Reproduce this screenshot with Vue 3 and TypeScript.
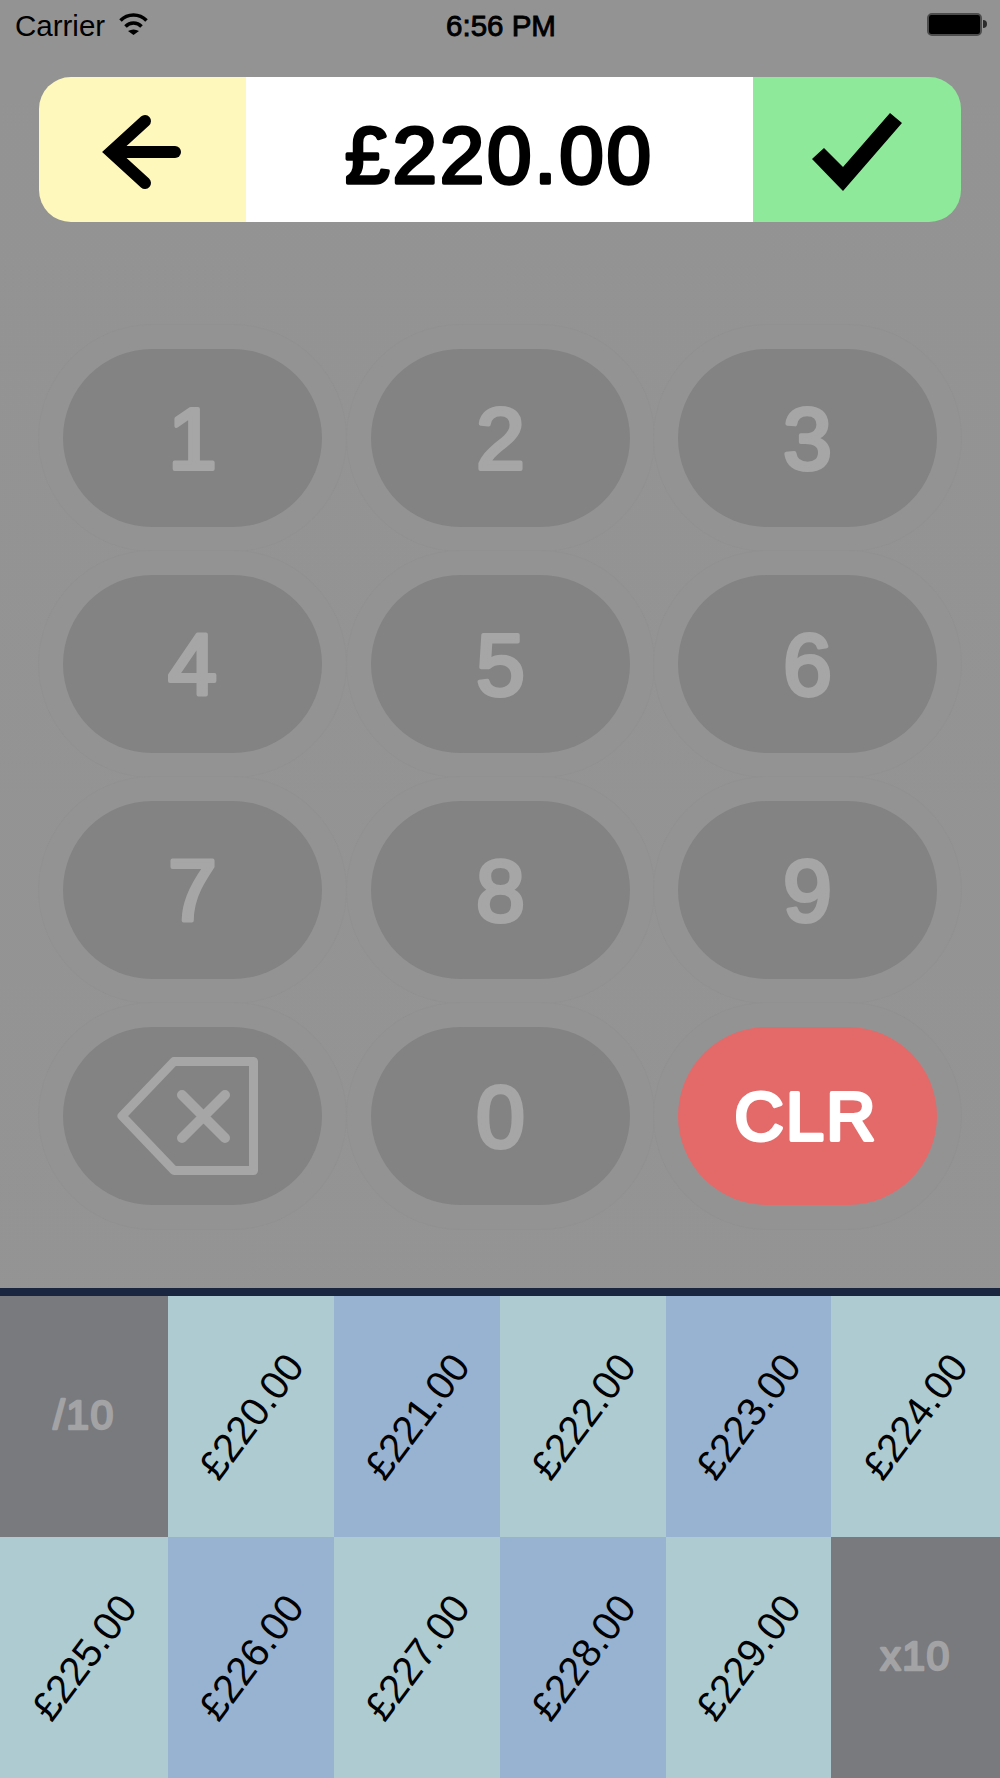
<template>
  <div class="screen">
    <div class="status">
      <div class="status__left">
        <span>Carrier</span>
        <svg class="wifi" width="29" height="22" viewBox="0 0 29 22">
          <path d="M1.500 7.500a18 18 0 0 1 26 0" />
          <path d="M6.500 13.500a11 11 0 0 1 16 0" />
          <path d="M9 18q5.500-3 11 0l-5.500 4z" class="wifi__dot" />
        </svg>
      </div>
      <span class="status__time">6:56 PM</span>
      <div class="status__right">
        <span class="battery"><i></i></span>
        <span class="battery__nub"></span>
      </div>
    </div>

    <div class="amount-bar">
      <button type="button" class="amount-bar__back">
        <svg width="80" height="76" viewBox="0 0 80 76">
          <path d="M44 7L10 38l34 31" fill="none" stroke="#000" stroke-width="12" stroke-linecap="round" stroke-miterlimit="4" />
          <path d="M12 38h62" fill="none" stroke="#000" stroke-width="12" stroke-linecap="round" />
        </svg>
      </button>
      <div class="amount-bar__value">
        <svg width="100%" height="100%">
          <text class="rounded" x="50%" y="50%" dy="31">£220.00</text>
        </svg>
      </div>
      <button type="button" class="amount-bar__ok">
        <svg width="92" height="80" viewBox="0 0 92 80">
          <path d="M91 11L79 1 32 55 13 36 1 47l31 32z" fill="#000" />
        </svg>
      </button>
    </div>

    <div class="keypad">
      <button v-for="key in keys" :key="key" type="button" class="key">
        <svg v-if="key === 'del'" class="key__del" width="141" height="118" viewBox="0 0 141 118">
          <path d="M136.500 4.500H57L5 59l52 54.500h79.500z" fill="none" stroke="#a6a6a6" stroke-width="9" stroke-linejoin="round" />
          <path d="M65 38l43 43M108 38L65 81" fill="none" stroke="#a6a6a6" stroke-width="10" stroke-linecap="round" />
        </svg>
        <svg v-else width="100%" height="100%">
          <text class="rounded" x="50%" y="50%" dy="31">{{ key }}</text>
        </svg>
      </button>
      <button type="button" class="key key--clear">
        <svg width="100%" height="100%">
          <text class="rounded" x="49.500%" y="50%" dy="24">CLR</text>
        </svg>
      </button>
    </div>

    <div class="amounts">
      <button
        v-for="cell in cells"
        :key="cell.label"
        type="button"
        class="cell"
        :class="`cell--${cell.kind}`"
      >
        <svg v-if="cell.kind === 'step'" width="100%" height="100%">
          <text class="rounded" x="50%" y="50%" dy="12">{{ cell.label }}</text>
        </svg>
        <span v-else>{{ cell.label }}</span>
      </button>
    </div>
  </div>
</template>

<script setup lang="ts">
interface Cell {
  label: string
  kind: 'step' | 'teal' | 'blue'
}

const keys = ['1', '2', '3', '4', '5', '6', '7', '8', '9', 'del', '0']

const cells: Cell[] = [
  { label: '/10', kind: 'step' },
  { label: '£220.00', kind: 'teal' },
  { label: '£221.00', kind: 'blue' },
  { label: '£222.00', kind: 'teal' },
  { label: '£223.00', kind: 'blue' },
  { label: '£224.00', kind: 'teal' },
  { label: '£225.00', kind: 'teal' },
  { label: '£226.00', kind: 'blue' },
  { label: '£227.00', kind: 'teal' },
  { label: '£228.00', kind: 'blue' },
  { label: '£229.00', kind: 'teal' },
  { label: 'x10', kind: 'step' }
]
</script>

<style>
html,
body {
  margin: 0;
  background: #939393;
}
</style>

<style scoped>
.screen {
  width: 1000px;
  height: 1778px;
  display: flex;
  flex-direction: column;
  background: linear-gradient(180deg, #939393 0%, #949494 100%);
  font-family: "Liberation Sans", Arial, sans-serif;
  overflow: hidden;
}

button {
  border: 0;
  padding: 0;
  margin: 0;
  font-family: inherit;
}

svg {
  display: block;
}

/* regular weight plus a round stroke gives the soft bold digits */
.rounded {
  fill: currentColor;
  stroke: currentColor;
  stroke-width: 4px;
  stroke-linejoin: round;
  stroke-linecap: round;
  text-anchor: middle;
}

.status {
  height: 52px;
  padding: 0 13px 0 15px;
  display: grid;
  grid-template-columns: 1fr auto 1fr;
  align-items: center;
  font-size: 29.5px;
  color: #000;
}

.status__left {
  display: flex;
  align-items: center;
  gap: 14px;
}

.wifi {
  margin-top: -4px;
}

.wifi path {
  fill: none;
  stroke: #000;
  stroke-width: 3.5;
}

.wifi .wifi__dot {
  fill: #000;
  stroke: none;
}

.status__time {
  -webkit-text-stroke: 0.9px #000;
}

.status__right {
  display: flex;
  align-items: center;
  justify-content: flex-end;
  margin-top: -4px;
}

.battery {
  width: 55px;
  height: 23px;
  box-sizing: border-box;
  border: 2px solid #4d4d4d;
  border-radius: 5px;
  display: block;
}

.battery i {
  display: block;
  height: 100%;
  background: #000;
  border-radius: 2px;
}

.battery__nub {
  width: 4px;
  height: 8px;
  margin-left: 1px;
  background: #2b2b2b;
  border-radius: 0 4px 4px 0;
}

.amount-bar {
  margin: 25px 39px 0;
  height: 145px;
  display: grid;
  grid-template-columns: 207px 1fr 208px;
  border-radius: 32px;
  overflow: hidden;
}

.amount-bar__back,
.amount-bar__ok {
  display: flex;
  align-items: center;
  justify-content: center;
}

.amount-bar__back {
  background: #fff8bd;
}

.amount-bar__back svg {
  margin-right: 4px;
  overflow: visible;
}

.amount-bar__ok {
  background: #8fe99a;
}

.amount-bar__value {
  background: #fff;
  color: #000;
  font-size: 80px;
  letter-spacing: 2.8px;
}

.amount-bar__value .rounded {
  stroke-width: 3.5px;
}

.keypad {
  margin: 127px 63px 0;
  display: grid;
  grid-template-columns: repeat(3, 259px);
  grid-auto-rows: 178px;
  column-gap: 48.5px;
  row-gap: 48px;
}

.key {
  border-radius: 89px;
  background: #838383;
  color: #a6a6a6;
  font-size: 88px;
  display: flex;
  align-items: center;
  justify-content: center;
  box-shadow: 0 0 0 24px #939393, 0 0 0 25px #919191;
}

.key__del {
  margin-right: 10px;
}

.key--clear {
  background: #e46a6a;
  color: #fff;
  font-size: 68px;
  letter-spacing: 2.5px;
}

.amounts {
  margin-top: auto;
  border-top: 8px solid #1a2540;
  display: grid;
  grid-template-columns: 168px 166px 166px 166px 165px 169px;
  grid-auto-rows: 241px;
}

.cell {
  display: flex;
  align-items: center;
  justify-content: center;
  color: #000;
  font-size: 40px;
}

.cell span {
  display: block;
  transform: rotate(-53deg);
  white-space: nowrap;
}

.cell--teal {
  background: #adcbd1;
}

.cell--blue {
  background: #98b3d1;
}

.cell--step {
  background: #797a7e;
  color: #a3a3a5;
  font-size: 41px;
  letter-spacing: 1.5px;
}

.cell--step .rounded {
  stroke-width: 2.5px;
}
</style>
